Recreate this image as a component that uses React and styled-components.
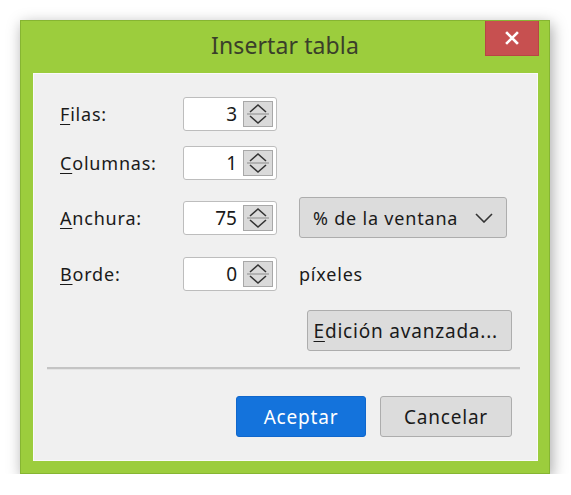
import React from "react";
import styled, { createGlobalStyle } from "styled-components";

const GlobalStyle = createGlobalStyle`
  html, body {
    margin: 0;
    padding: 0;
    background: #ffffff;
    font-family: "Noto Sans", "Open Sans", "Liberation Sans", sans-serif;
  }
`;

const rows = [
  { key: "F", rest: "ilas:", value: "3", top: 0 },
  { key: "C", rest: "olumnas:", value: "1", top: 15 },
  { key: "A", rest: "nchura:", value: "75", top: 17, select: "% de la ventana" },
  { key: "B", rest: "orde:", value: "0", top: 19, unit: "píxeles" },
];

const App = () => {
  return (
    <Page>
      <GlobalStyle />
      <Window>
        <TitleBar>
          <span />
          <Title>Insertar tabla</Title>
          <CloseButton aria-label="Cerrar">
            <svg width="16" height="16" viewBox="0 0 16 16">
              <path d="M3 3 L13 13 M13 3 L3 13" stroke="#fff" strokeWidth="2.6" strokeLinecap="square" />
            </svg>
          </CloseButton>
        </TitleBar>
        <Client>
          <Form>
            {rows.map((r) => (
              <Row key={r.key} $top={r.top} $tall={!!r.select}>
                <Label>
                  <u>{r.key}</u>
                  {r.rest}
                </Label>
                <SpinBox>
                  <SpinValue>{r.value}</SpinValue>
                  <SpinButton>
                    <svg width="26" height="24" viewBox="0 0 26 24">
                      <path d="M5 10 L13 3 L21 10" fill="none" stroke="#333" strokeWidth="1.6" />
                      <line x1="2" y1="12" x2="24" y2="12" stroke="#8a8a8a" strokeWidth="1" />
                      <path d="M5 14 L13 21 L21 14" fill="none" stroke="#333" strokeWidth="1.6" />
                    </svg>
                  </SpinButton>
                </SpinBox>
                {r.select && (
                  <Select>
                    <span>{r.select}</span>
                    <svg width="18" height="10" viewBox="0 0 18 10">
                      <path d="M1 1 L9 9 L17 1" fill="none" stroke="#333" strokeWidth="1.6" />
                    </svg>
                  </Select>
                )}
                {r.unit && <Unit>{r.unit}</Unit>}
              </Row>
            ))}
            <AdvancedRow>
              <Button>
                <u>E</u>dición avanzada...
              </Button>
            </AdvancedRow>
          </Form>
          <Separator />
          <Footer>
            <Button $primary $w={130}>Aceptar</Button>
            <Button $w={132}>Cancelar</Button>
          </Footer>
        </Client>
      </Window>
    </Page>
  );
};

const Page = styled.div`
  padding: 20px 0 0 20px;
`;

const Window = styled.div`
  width: 530px;
  height: 454px;
  box-sizing: border-box;
  background: #9ccd3d;
  border: 1px solid #86b532;
  box-shadow: 2px 4px 14px rgba(0, 0, 0, 0.35);
  display: flex;
  flex-direction: column;
`;

const TitleBar = styled.div`
  height: 52px;
  display: grid;
  grid-template-columns: 1fr auto 1fr;
  align-items: start;
`;

const Title = styled.div`
  margin-top: 8px;
  font-size: 23px;
  color: #3a3f2a;
  letter-spacing: 0.1px;
`;

const CloseButton = styled.div`
  justify-self: end;
  margin-right: 10px;
  width: 54px;
  height: 35px;
  background: #c75050;
  border: 1px solid #b84545;
  border-top: none;
  box-sizing: border-box;
  display: flex;
  align-items: center;
  justify-content: center;
`;

const Client = styled.div`
  flex: 1;
  margin: 0 11px 12px 12px;
  background: #f0f0f0;
  border: 1px solid #fafafa;
  display: flex;
  flex-direction: column;
`;

const Form = styled.div`
  padding: 23px 25px 0 26px;
  display: flex;
  flex-direction: column;
`;

const Row = styled.div`
  display: flex;
  align-items: center;
  height: ${(p) => (p.$tall ? 41 : 34)}px;
  margin-top: ${(p) => p.$top}px;
`;

const Label = styled.div`
  width: 123px;
  font-size: 18px;
  letter-spacing: 0.8px;
  color: #1a1a1a;
  u {
    text-underline-offset: 3px;
  }
`;

const SpinBox = styled.div`
  width: 94px;
  height: 34px;
  box-sizing: border-box;
  background: #fff;
  border: 1px solid #bdbdbd;
  border-radius: 3px;
  display: flex;
  align-items: center;
  padding: 0 3px 0 0;
`;

const SpinValue = styled.div`
  flex: 1;
  text-align: right;
  font-size: 19px;
  color: #1a1a1a;
  padding-right: 6px;
`;

const SpinButton = styled.div`
  width: 30px;
  height: 26px;
  box-sizing: border-box;
  background: #dadada;
  border: 1px solid #a8a8a8;
  display: flex;
  align-items: center;
  justify-content: center;
`;

const Select = styled.div`
  margin-left: 22px;
  width: 208px;
  height: 41px;
  box-sizing: border-box;
  background: #dcdcdc;
  border: 1px solid #adadad;
  border-radius: 3px;
  display: flex;
  align-items: center;
  justify-content: space-between;
  padding: 0 13px 0 13px;
  font-size: 18px;
  letter-spacing: 0.8px;
  color: #1a1a1a;
`;

const Unit = styled.div`
  margin-left: 22px;
  font-size: 18px;
  letter-spacing: 0.8px;
  color: #1a1a1a;
`;

const AdvancedRow = styled.div`
  display: flex;
  justify-content: flex-end;
  margin-top: 19px;
`;

const Button = styled.div`
  height: 41px;
  box-sizing: border-box;
  ${(p) => (p.$w ? `width: ${p.$w}px;` : "padding: 0 13px 0 6px;")}
  background: ${(p) => (p.$primary ? "#1473dc" : "#dcdcdc")};
  border: 1px solid ${(p) => (p.$primary ? "#1067cc" : "#adadad")};
  border-radius: 3px;
  color: ${(p) => (p.$primary ? "#fff" : "#1a1a1a")};
  font-size: 19px;
  letter-spacing: 0.8px;
  display: flex;
  align-items: center;
  justify-content: center;
  u {
    text-underline-offset: 3px;
  }
`;

const Separator = styled.div`
  margin: 16px 17px 0 13px;
  height: 2px;
  background: #c4c4c4;
  border-bottom: 1px solid #e4e4e4;
`;

const Footer = styled.div`
  display: flex;
  justify-content: flex-end;
  gap: 14px;
  padding: 26px 25px 0 0;
`;

export default App;
